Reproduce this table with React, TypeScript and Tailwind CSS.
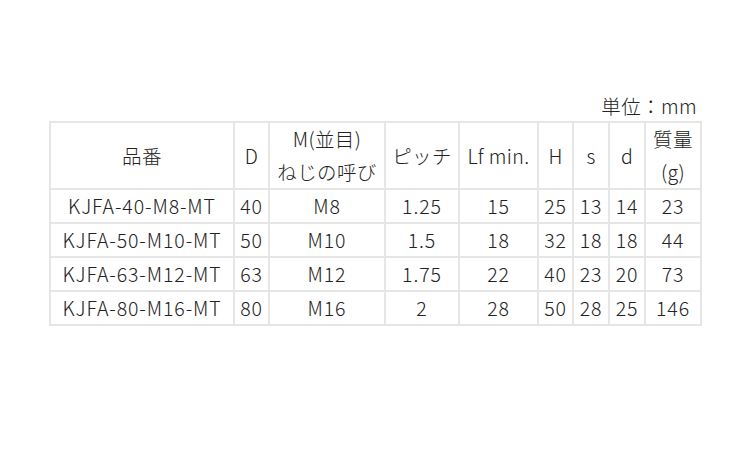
const rows = [
  ["KJFA-40-M8-MT", "40", "M8", "1.25", "15", "25", "13", "14", "23"],
  ["KJFA-50-M10-MT", "50", "M10", "1.5", "18", "32", "18", "18", "44"],
  ["KJFA-63-M12-MT", "63", "M12", "1.75", "22", "40", "23", "20", "73"],
  ["KJFA-80-M16-MT", "80", "M16", "2", "28", "50", "28", "25", "146"],
];

const widths = ["w-[184px]", "w-[35px]", "w-[116px]", "w-[74px]", "w-[79px]", "w-[35px]", "w-[36px]", "w-[36px]", "w-[56px]"];

export default function App() {
  return (
    <div className="w-[750px] h-[450px] bg-white text-[#222] font-['Noto_Sans_CJK_JP',sans-serif] font-light text-[19.5px] tracking-[0.4px]">
      <div className="pt-[91px] pl-[49px] w-[700px]">
        <p className="text-right leading-[30px] pr-[3px]">単位：mm</p>
        <table className="table-fixed border-collapse w-[651px] text-center leading-[32px]">
          <colgroup>
            {widths.map((w, i) => (
              <col key={i} className={w} />
            ))}
          </colgroup>
          <thead>
            <tr className="h-[67px]">
              <th className="font-light border-2 border-[#e6e6e6] p-0">品番</th>
              <th className="font-light border-2 border-[#e6e6e6] p-0">D</th>
              <th className="font-light border-2 border-[#e6e6e6] p-0 leading-[32.5px]">
                M(並目)
                <br />
                ねじの呼び
              </th>
              <th className="font-light border-2 border-[#e6e6e6] p-0">ピッチ</th>
              <th className="font-light border-2 border-[#e6e6e6] p-0">Lf min.</th>
              <th className="font-light border-2 border-[#e6e6e6] p-0">H</th>
              <th className="font-light border-2 border-[#e6e6e6] p-0">s</th>
              <th className="font-light border-2 border-[#e6e6e6] p-0">d</th>
              <th className="font-light border-2 border-[#e6e6e6] p-0 leading-[32.5px]">
                質量
                <br />
                (g)
              </th>
            </tr>
          </thead>
          <tbody className="tracking-[0.9px]">
            {rows.map((r) => (
              <tr key={r[0]} className="h-[34px]">
                {r.map((c, i) => (
                  <td key={i} className="border-2 border-[#e6e6e6] p-0 whitespace-nowrap">
                    {c}
                  </td>
                ))}
              </tr>
            ))}
          </tbody>
        </table>
      </div>
    </div>
  );
}
